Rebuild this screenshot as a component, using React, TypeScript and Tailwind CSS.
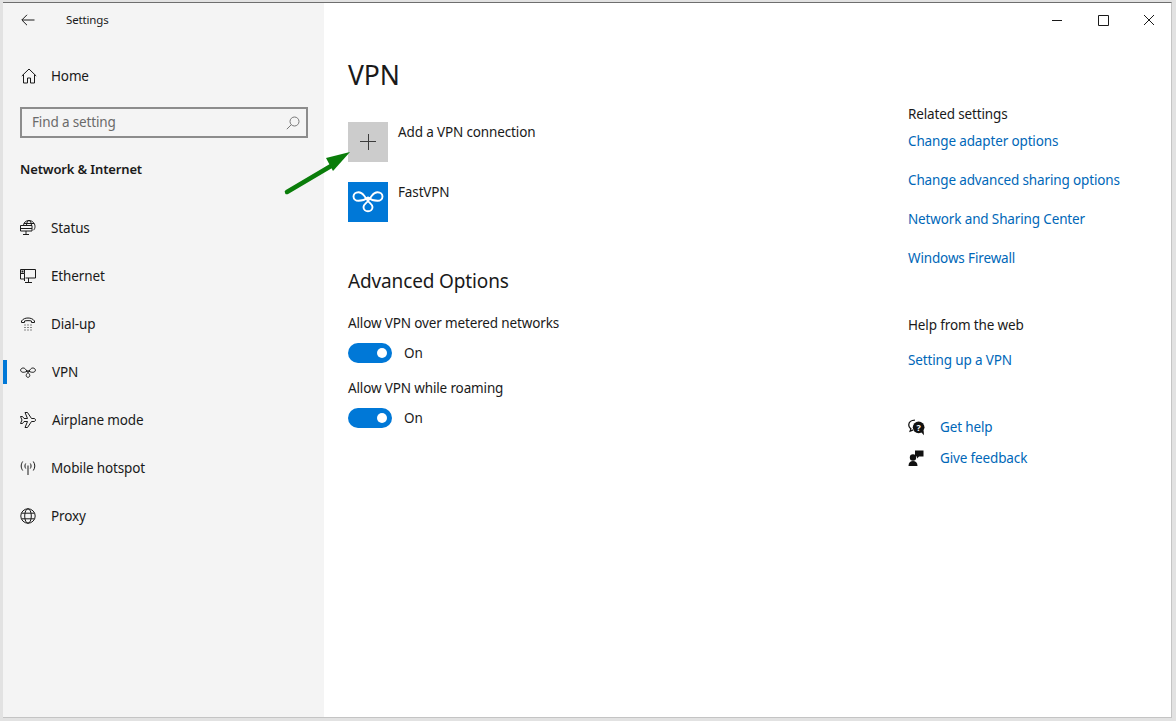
import type { ReactNode } from "react";

const Svg = ({ children, className = "h-4 w-4" }: { children: ReactNode; className?: string }) => (
  <svg viewBox="0 0 16 16" fill="none" stroke="currentColor" strokeWidth="1" className={className}>
    {children}
  </svg>
);

const navItems: { label: string; active?: boolean; labelClass?: string; icon: ReactNode }[] = [
  {
    label: "Status",
    icon: (
      <Svg>
        <path d="M3.500 5.500C3.500 2.500 6 .5 9 .5s6 2.500 6 6c0 1.500-.5 2.700-1.500 3.700M6.500 5.500C6.500 2.500 7.700 .5 9 .5s2.500 2.500 2.500 5M4 3.500h10M.5 5.500h11.500v5.500H.5zM.5 8.500h11.500M6 11v3.500M3 14.500h6" />
      </Svg>
    ),
  },
  {
    label: "Ethernet",
    icon: (
      <Svg>
        <path d="M.5 1.500h15v8.500H5.500M.5 1.500v9.500M.5 5.500h4V1.500M4.500 5.500v7.500M.5 11h4M8.500 10v4.500M5 14.500h7" />
        <rect x="1.500" y="2.500" width="2" height="2" fill="currentColor" stroke="none" />
      </Svg>
    ),
  },
  {
    label: "Dial-up",
    icon: (
      <Svg>
        <path d="M1.500 6.500V5C3 2.800 5.500 2 8 2s5 .8 6.500 3v1.500h-3V5C10 4.500 6 4.500 4.500 5v1.500z" />
        <path
          d="M4.500 9h1M7.500 9h1M10.500 9h1M4.500 11.500h1M7.500 11.500h1M10.500 11.500h1M4.500 14h1M7.500 14h1M10.500 14h1"
          strokeWidth="1.200"
        />
      </Svg>
    ),
  },
  {
    label: "VPN",
    active: true,
    labelClass: "ml-[16px]",
    icon: (
      <Svg>
        <path d="M8 6.500C6.800 7.500 5.300 8.300 3.200 8.300 1.800 8.300.6 7.400.6 6.200S1.800 4 3.200 4c1.300 0 2 .8 2.800 1.800L8 8.500c1 1.300 1.800 1.800 1.800 3 0 1-.8 1.800-1.800 1.800s-1.800-.8-1.800-1.800c0-1.200.8-1.700 1.800-3l2-2.700C10.800 4.800 11.500 4 12.800 4c1.400 0 2.600 1 2.600 2.200s-1.200 2.100-2.600 2.100c-2.100 0-3.600-.8-4.800-1.800" />
      </Svg>
    ),
  },
  {
    label: "Airplane mode",
    labelClass: "ml-[16px]",
    icon: (
      <Svg>
        <path d="M.5 4.500h2l1.500 2h3.500L5 .5h2.500l4 6h2.500c1 0 1.500.8 1.500 1.500s-.5 1.500-1.500 1.500h-2.500l-4 6H5l2.500-6H4l-1.500 2h-2L2 8z" />
      </Svg>
    ),
  },
  {
    label: "Mobile hotspot",
    icon: (
      <Svg>
        <path d="M8 5.500v9.500M5.700 3.500C4.700 5 4.700 7 5.700 8.500M10.300 3.500c1 1.500 1 3.500 0 5M2.700 1.500c-2 3-2 6 0 9M13.300 1.500c2 3 2 6 0 9" />
      </Svg>
    ),
  },
  {
    label: "Proxy",
    icon: (
      <Svg>
        <circle cx="8" cy="8" r="7.200" />
        <ellipse cx="8" cy="8" rx="3.300" ry="7.200" />
        <path d="M1.500 5.200h13M1.500 10.800h13" />
      </Svg>
    ),
  },
];

const FastVpnGlyph = () => (
  <svg viewBox="0 0 40 40" fill="none" stroke="white" strokeWidth="1.900" className="h-10 w-10">
    <path d="M20 15.500C17.500 17.500 15 18.800 10.500 18.800 7.500 18.800 5.500 16.800 5.500 14.500S7.500 10.200 10.500 10.200C13 10.200 14.500 11.500 16 13.500L20 19C22 21.500 24.500 22.500 24.500 25 24.500 27.500 22.500 29.300 20 29.300S15.500 27.500 15.500 25C15.500 22.500 18 21.500 20 19L24 13.500C25.500 11.500 27 10.200 29.500 10.200 32.500 10.200 34.500 12.200 34.500 14.500S32.500 18.800 29.500 18.800C25 18.800 22.500 17.500 20 15.500z" />
  </svg>
);

const Toggle = () => (
  <div className="mt-[10px] flex items-center">
    <div className="flex h-5 w-11 items-center justify-end rounded-full bg-[#0078d7] pr-[5px]">
      <div className="h-[10px] w-[10px] rounded-full bg-white" />
    </div>
    <span className="ml-3 text-[13.5px] leading-5">On</span>
  </div>
);

const RelatedLink = ({ children, className = "" }: { children: ReactNode; className?: string }) => (
  <a className={`block text-[13.5px] leading-5 text-[#0067b8] ${className}`}>{children}</a>
);

export default function App() {
  return (
    <div className="relative h-[721px] w-[1176px] overflow-hidden bg-[#e2e2e2] pb-[3px] pl-[3px] pr-[4px] pt-[2px] font-['Noto_Sans','Open_Sans',sans-serif] tracking-[-0.14px] text-[#1a1a1a]">
      <div className="flex h-full border-b border-r border-t border-b-[#c4c4c4] border-r-[#c4c4c4] border-t-[#6e6e6e]">
        {/* left nav */}
        <aside className="w-[321px] shrink-0 bg-[#f4f4f4]">
          <div className="flex h-[33px] items-center pl-[18px]">
            <svg viewBox="0 0 14 12" fill="none" stroke="currentColor" strokeWidth="1" className="h-[12px] w-[14px]">
              <path d="M13.500 6H1M6 .8L.8 6 6 11.200" />
            </svg>
            <span className="ml-[31px] text-[11.5px] leading-4">Settings</span>
          </div>
          <div className="mt-[16px] flex h-[48px] items-center pl-[18px]">
            <Svg>
              <path d="M.8 8L8 1l7.200 7M2.500 6.500v8.500h4v-5h3v5h4V6.500" />
            </Svg>
            <span className="ml-[14px] text-[13.5px] leading-5">Home</span>
          </div>
          <div className="ml-[17px] mr-[16px] mt-[7px] flex h-[31px] items-center justify-between border-2 border-[#8c8c8c] pl-[10px] pr-[6px]">
            <span className="mt-[-1px] text-[13.5px] leading-5 text-[#6a6a6a]">Find a setting</span>
            <svg viewBox="0 0 14 14" fill="none" stroke="#777" strokeWidth="1" className="h-[14px] w-[14px]">
              <circle cx="8.500" cy="5.500" r="4.500" />
              <path d="M5.300 8.700L.8 13.200" />
            </svg>
          </div>
          <div className="ml-[17px] mt-[21px] text-[13px] font-semibold leading-5">Network &amp; Internet</div>
          <nav className="mt-[25px]">
            {navItems.map((item) => (
              <div key={item.label} className="flex h-12 items-center">
                <div className={`h-6 w-[4px] ${item.active ? "bg-[#0078d7]" : ""}`} />
                <div className="ml-[13px]">{item.icon}</div>
                <span className={`text-[13.5px] leading-5 ${item.labelClass ?? "ml-[15px]"}`}>{item.label}</span>
              </div>
            ))}
          </nav>
        </aside>

        {/* content */}
        <main className="relative flex min-w-0 flex-1 bg-white pl-[24px]">
          <div className="w-[560px] shrink-0">
            <h1 className="mt-[52px] text-[26.5px] font-normal leading-[40px]">VPN</h1>
            <div className="mt-[27px] flex h-10 items-start">
              <div className="flex h-10 w-10 items-center justify-center bg-[#cccccc]">
                <svg viewBox="0 0 16 16" stroke="#3c3c3c" strokeWidth="1" className="h-4 w-4">
                  <path d="M8.500 0v16M0 7.500h16" />
                </svg>
              </div>
              <span className="ml-[10px] text-[13.5px] leading-5">Add a VPN connection</span>
            </div>
            <div className="mt-5 flex h-10 items-start">
              <div className="bg-[#0078d7]">
                <FastVpnGlyph />
              </div>
              <span className="ml-[10px] text-[13.5px] leading-5">FastVPN</span>
            </div>
            <h2 className="mt-[44px] text-[19px] font-normal leading-[30px]">Advanced Options</h2>
            <div className="mt-[17px] text-[13.5px] leading-5">Allow VPN over metered networks</div>
            <Toggle />
            <div className="mt-[15px] text-[13.5px] leading-5">Allow VPN while roaming</div>
            <Toggle />
          </div>

          <div className="flex-1">
            <div className="flex h-[33px] items-center justify-end">
              <svg viewBox="0 0 104 12" fill="none" stroke="#1a1a1a" strokeWidth="1" className="mr-[17px] h-[12px] w-[104px]">
                <path d="M2 6.500h10M48.500 1.500h10v10h-10zM94 1l10 10M104 1l-10 10" />
              </svg>
            </div>
            <section className="mt-[68px]">
              <div className="text-[13.5px] leading-5">Related settings</div>
              <RelatedLink className="mt-[7px]">Change adapter options</RelatedLink>
              <RelatedLink className="mt-[19px]">Change advanced sharing options</RelatedLink>
              <RelatedLink className="mt-[19px]">Network and Sharing Center</RelatedLink>
              <RelatedLink className="mt-[19px]">Windows Firewall</RelatedLink>
            </section>
            <section className="mt-[47px]">
              <div className="text-[13.5px] leading-5">Help from the web</div>
              <RelatedLink className="mt-[15px]">Setting up a VPN</RelatedLink>
            </section>
            <section className="mt-[47px]">
              <div className="flex h-5 items-center">
                <svg viewBox="0 0 16 16" className="h-[17px] w-[17px]">
                  <path d="M6.500 1C3 1 .7 3 .7 5.700c0 1.600.8 2.800 2 3.600L2 11.500l3-1.300" fill="none" stroke="#111" strokeWidth="1.200" />
                  <circle cx="10" cy="7.800" r="5.500" fill="#111" />
                  <path d="M12 12l3 3.200-.3-4.500z" fill="#111" />
                  <text x="10" y="11" textAnchor="middle" fontSize="8.500" fontWeight="700" fill="#fff">?</text>
                </svg>
                <RelatedLink className="ml-[15px]">Get help</RelatedLink>
              </div>
              <div className="mt-[11px] flex h-5 items-center">
                <svg viewBox="0 0 16 16" fill="#111" className="h-4 w-4">
                  <circle cx="5" cy="7.500" r="3.200" />
                  <path d="M.5 16c0-3.500 1.800-5 4.500-5s4.500 1.500 4.500 5z" />
                  <path d="M7 .5h8.500v6H11l-2 2v-2H7z" />
                </svg>
                <RelatedLink className="ml-4">Give feedback</RelatedLink>
              </div>
            </section>
          </div>

          {/* green annotation arrow */}
          <svg viewBox="0 0 80 50" className="absolute left-[-45px] top-[145px] h-[50px] w-[80px]">
            <path d="M8 44L52 18" stroke="#0a7d0a" strokeWidth="4.500" strokeLinecap="round" />
            <path d="M47 10L71 4 54 23z" fill="#0a7d0a" />
          </svg>
        </main>
      </div>
    </div>
  );
}
